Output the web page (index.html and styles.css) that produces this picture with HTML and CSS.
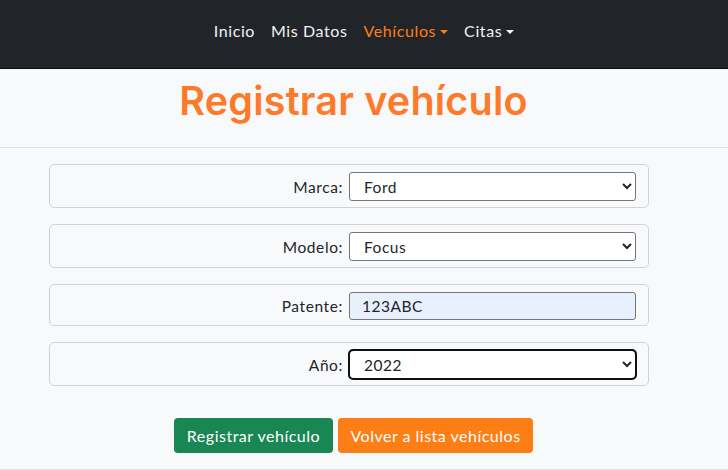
FILE: index.html
```html
<!DOCTYPE html>
<html lang="es">
<head>
<meta charset="utf-8">
<link rel="stylesheet" href="styles.css">
</head>
<body>
<nav class="navbar">
  <a class="nav-link" href="#">Inicio</a>
  <a class="nav-link" href="#">Mis Datos</a>
  <a class="nav-link active" href="#">Vehículos<span class="caret"></span></a>
  <a class="nav-link" href="#">Citas<span class="caret"></span></a>
</nav>
<header class="page-header">
  <h1 class="title">Registrar vehículo</h1>
</header>
<main class="content">
  <form class="form">
    <div class="field">
      <label class="field-label" for="marca">Marca:</label>
      <select class="control" id="marca"><option>Ford</option></select>
    </div>
    <div class="field">
      <label class="field-label" for="modelo">Modelo:</label>
      <select class="control" id="modelo"><option>Focus</option></select>
    </div>
    <div class="field field-input">
      <label class="field-label" for="patente">Patente:</label>
      <input class="control input" id="patente" value="123ABC">
    </div>
    <div class="field">
      <label class="field-label" for="anio">Año:</label>
      <select class="control focused" id="anio"><option>2022</option></select>
    </div>
    <div class="actions">
      <button type="button" class="btn btn-green">Registrar vehículo</button>
      <button type="button" class="btn btn-orange">Volver a lista vehículos</button>
    </div>
  </form>
</main>
</body>
</html>
```
FILE: styles.css
```css
* { box-sizing: border-box; }
html, body { margin: 0; padding: 0; }
body {
  background: #f8f9fa;
  font-family: "Lato", "Noto Sans", sans-serif;
  color: #212529;
  height: 470px;
  overflow: hidden;
}
.navbar {
  background: #212529;
  height: 69px;
  border-bottom: 1px solid #0b0c0d;
  display: flex;
  justify-content: center;
  align-items: flex-start;
  padding-top: 21px;
}
.nav-link {
  color: #f1f3f5;
  text-decoration: none;
  font-size: 16px;
  line-height: 20px;
  padding: 0 8px;
  display: flex;
  align-items: center;
  letter-spacing: 0.6px;
}
.nav-link.active { color: #fd7e14; }
.caret {
  display: inline-block;
  margin-left: 4px;
  border-top: 4px solid currentColor;
  border-left: 4px solid transparent;
  border-right: 4px solid transparent;
  margin-top: 1px;
}
.page-header {
  height: 79px;
  border-bottom: 1px solid #dee2e6;
  padding-right: 21px;
  display: flex;
  justify-content: center;
}
.title {
  margin: 6px 0 0;
  font-family: "Inter", "Lato", sans-serif;
  font-weight: 600;
  font-size: 39.5px;
  line-height: 52px;
  color: #fd7a2a;
  letter-spacing: 0.2px;
}
.content {
  padding: 16px 0 0 49px;
  border-bottom: 1px solid #dee2e6;
  height: 322px;
}
.form {
  width: 600px;
  display: flex;
  flex-direction: column;
  gap: 16px;
}
.field {
  border: 1px solid #ced4da;
  border-radius: 5px;
  display: grid;
  grid-template-columns: 299px 1fr;
  align-items: center;
  padding: 7px 12px 6px 0;
  height: 44px;
}
.field-input { height: 42px; padding-top: 6px; padding-bottom: 5px; }
.field-label {
  text-align: right;
  padding-right: 6px;
  font-size: 15.5px;
  letter-spacing: 0.6px;
}
.control {
  font-family: "Lato", "Noto Sans", sans-serif;
  font-size: 15.5px;
  letter-spacing: 0.5px;
  color: #212529;
  height: 29px;
  border: 1px solid #767676;
  border-radius: 3px;
  background: #fff;
  padding: 0 10px;
  width: 100%;
}
.input {
  height: 28px;
  background: #e8f0fe;
  padding-left: 12px;
  outline: none;
}
.focused {
  outline: 2px solid #101010;
  outline-offset: -1px;
  border-radius: 4px;
}
.actions {
  margin-top: 16px;
  display: flex;
  gap: 5px;
  padding-left: 125px;
}
.btn {
  font-family: "Lato", "Noto Sans", sans-serif;
  font-size: 16px;
  letter-spacing: 0.5px;
  color: #fff;
  border: none;
  border-radius: 4px;
  height: 35px;
  padding: 0 8px;
  cursor: pointer;
}
.btn-green { background: #198754; width: 159px; }
.btn-orange { background: #fd7e14; width: 195px; }
```
